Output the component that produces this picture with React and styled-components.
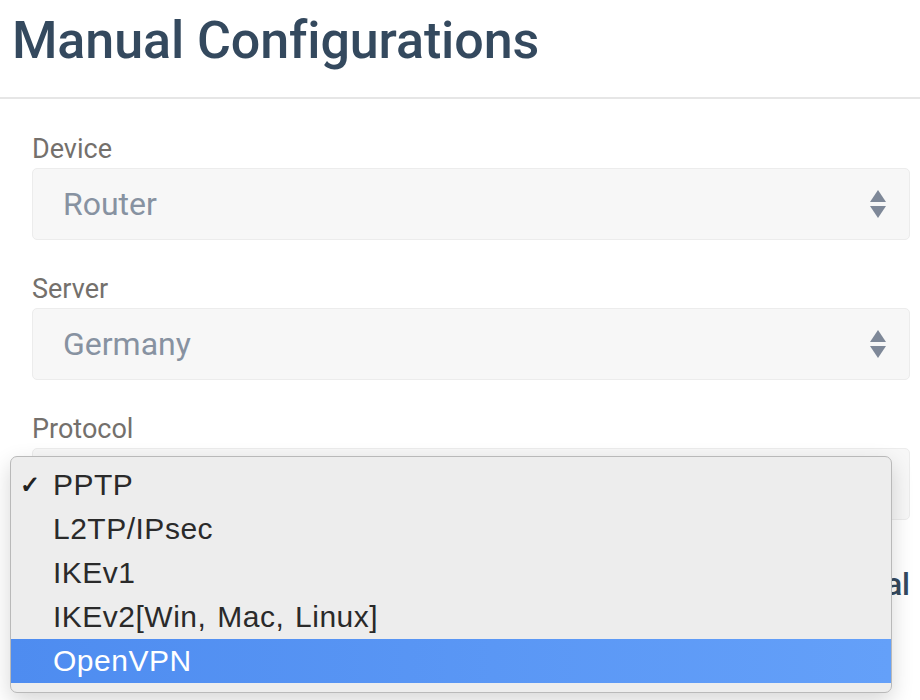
import React from "react";
import styled, { createGlobalStyle } from "styled-components";

const GlobalStyle = createGlobalStyle`
  html, body {
    margin: 0;
    padding: 0;
    background: #ffffff;
    font-family: Roboto, "Liberation Sans", sans-serif;
  }
`;

const Page = styled.div`
  width: 920px;
  height: 700px;
  overflow: hidden;
  background: #fff;
`;

const Header = styled.header`
  border-bottom: 2px solid #e6e6e6;
  padding: 10px 12px 0;
  height: 99px;
  box-sizing: border-box;
`;

const Title = styled.h1`
  margin: 0;
  font-size: 52px;
  line-height: 62px;
  font-weight: 500;
  color: #34495e;
  letter-spacing: -0.1px;
`;

const Form = styled.div`
  padding: 34px 10px 0 32px;
  display: flex;
  flex-direction: column;
  gap: 33px;
`;

const Field = styled.div`
  display: flex;
  flex-direction: column;
  gap: 3px;
`;

const Label = styled.label`
  font-size: 27px;
  line-height: 32px;
  color: #74706c;
`;

const SelectWrap = styled.div`
  position: relative;
`;

const SelectBox = styled.div`
  height: 72px;
  box-sizing: border-box;
  background: #f7f7f7;
  border: 1px solid #ececec;
  border-radius: 5px;
  display: flex;
  align-items: center;
  justify-content: space-between;
  padding: 0 22px 0 30px;
  font-size: 32px;
  color: #8792a1;
`;

const Arrows = () => (
  <svg width="18" height="30" viewBox="0 0 18 30">
    <path d="M9 1 L17 13 H1 Z" fill="#7e8898" />
    <path d="M9 29 L17 17 H1 Z" fill="#7e8898" />
  </svg>
);

const HintRow = styled.div`
  display: flex;
  justify-content: flex-end;
  font-size: 31px;
  line-height: 36px;
  font-weight: 500;
  color: #34495e;
  margin-top: 44px;
`;

const Menu = styled.ul`
  position: absolute;
  left: -22px;
  top: 8px;
  width: 882px;
  margin: 0;
  padding: 6px 0 9px;
  list-style: none;
  box-sizing: border-box;
  background: #ededed;
  border: 1px solid #b9b9b9;
  border-radius: 7px;
  box-shadow: 0 8px 22px rgba(0, 0, 0, 0.16);
  font-family: "Liberation Sans", Arial, sans-serif;
  z-index: 2;
`;

const Option = styled.li`
  height: 44px;
  display: flex;
  align-items: center;
  padding-left: 42px;
  position: relative;
  font-size: 30px;
  letter-spacing: 0.5px;
  word-spacing: 2px;
  color: ${(p) => (p.$active ? "#ffffff" : "#2a2a2a")};
  background: ${(p) =>
    p.$active ? "linear-gradient(90deg, #4e8cf0, #64a0f9)" : "transparent"};
`;

const Check = styled.span`
  position: absolute;
  left: 9px;
  font-size: 24px;
  font-weight: bold;
  color: #222;
`;

const protocols = ["PPTP", "L2TP/IPsec", "IKEv1", "IKEv2[Win, Mac, Linux]", "OpenVPN"];

export default function App() {
  return (
    <Page>
      <GlobalStyle />
      <Header>
        <Title>Manual Configurations</Title>
      </Header>
      <Form>
        <Field>
          <Label>Device</Label>
          <SelectBox>
            Router
            <Arrows />
          </SelectBox>
        </Field>
        <Field>
          <Label>Server</Label>
          <SelectBox>
            Germany
            <Arrows />
          </SelectBox>
        </Field>
        <Field>
          <Label>Protocol</Label>
          <SelectWrap>
            <SelectBox>
              PPTP
              <Arrows />
            </SelectBox>
            <Menu>
              {protocols.map((p, i) => (
                <Option key={p} $active={p === "OpenVPN"}>
                  {i === 0 && <Check>✓</Check>}
                  {p}
                </Option>
              ))}
            </Menu>
          </SelectWrap>
          <HintRow>Tutorial</HintRow>
        </Field>
      </Form>
    </Page>
  );
}
